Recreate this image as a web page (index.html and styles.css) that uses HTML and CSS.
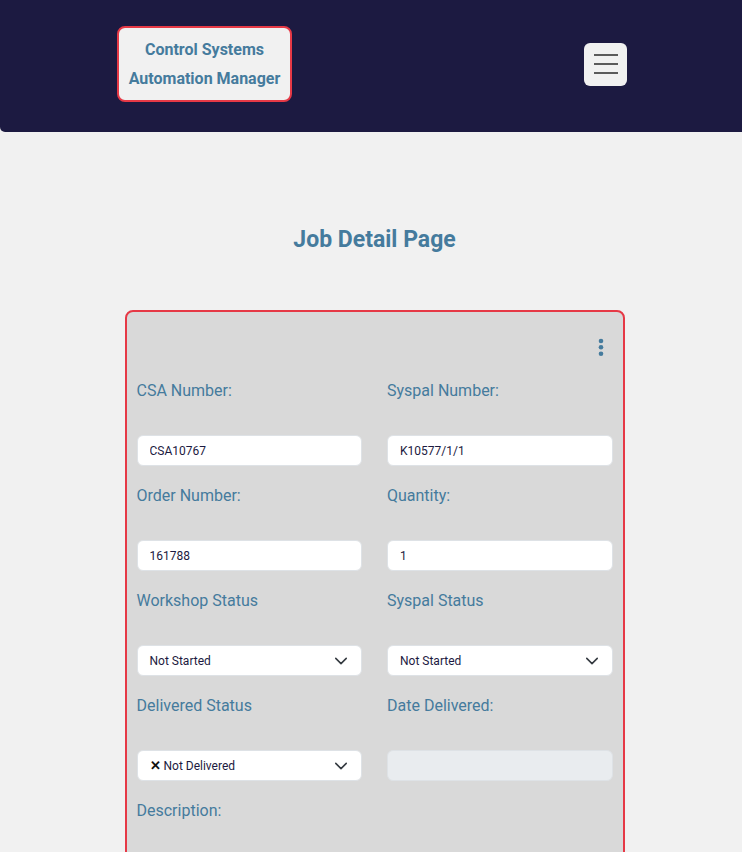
FILE: index.html
```html
<!DOCTYPE html>
<html lang="en">
<head>
<meta charset="utf-8">
<title>Job Detail Page</title>
<link rel="stylesheet" href="styles.css">
</head>
<body>
<header class="topbar">
  <div class="brand">Control Systems<br>Automation Manager</div>
  <button class="burger" aria-label="Menu">
    <span></span><span></span><span></span>
  </button>
</header>
<main class="page">
  <h1 class="title">Job Detail Page</h1>
  <section class="card">
    <div class="card-top">
      <button class="kebab" aria-label="More">
        <svg width="24" height="24" viewBox="0 0 24 24"><circle cx="12" cy="6" r="2.3" fill="#457b9d"/><circle cx="12" cy="12.3" r="2.3" fill="#457b9d"/><circle cx="12" cy="18.8" r="2.3" fill="#457b9d"/></svg>
      </button>
    </div>
    <div class="grid">
      <div class="field">
        <label class="label">CSA Number:</label>
        <input class="control" type="text" value="CSA10767">
      </div>
      <div class="field">
        <label class="label">Syspal Number:</label>
        <input class="control" type="text" value="K10577/1/1">
      </div>
      <div class="field">
        <label class="label">Order Number:</label>
        <input class="control" type="text" value="161788">
      </div>
      <div class="field">
        <label class="label">Quantity:</label>
        <input class="control" type="text" value="1">
      </div>
      <div class="field">
        <label class="label">Workshop Status</label>
        <div class="control select">Not Started<svg class="chev" width="14" height="14" viewBox="0 0 16 16"><path d="M2 5l6 6 6-6" fill="none" stroke="#343a40" stroke-width="1.8" stroke-linecap="round" stroke-linejoin="round"/></svg></div>
      </div>
      <div class="field">
        <label class="label">Syspal Status</label>
        <div class="control select">Not Started<svg class="chev" width="14" height="14" viewBox="0 0 16 16"><path d="M2 5l6 6 6-6" fill="none" stroke="#343a40" stroke-width="1.8" stroke-linecap="round" stroke-linejoin="round"/></svg></div>
      </div>
      <div class="field">
        <label class="label">Delivered Status</label>
        <div class="control select"><span class="x">✕</span>&nbsp;Not Delivered<svg class="chev" width="14" height="14" viewBox="0 0 16 16"><path d="M2 5l6 6 6-6" fill="none" stroke="#343a40" stroke-width="1.8" stroke-linecap="round" stroke-linejoin="round"/></svg></div>
      </div>
      <div class="field">
        <label class="label">Date Delivered:</label>
        <input class="control disabled" type="text" value="" disabled>
      </div>
      <div class="field wide">
        <label class="label">Description:</label>
        <textarea class="control area"></textarea>
      </div>
    </div>
  </section>
</main>
</body>
</html>
```
FILE: styles.css
```css
html { scrollbar-width: none; }
html::-webkit-scrollbar { display: none; }
* { box-sizing: border-box; }
body {
  margin: 0;
  background: #f1f1f1;
  font-family: Roboto, "Liberation Sans", sans-serif;
}
.topbar {
  height: 132px;
  background: #1c1a41;
  border-bottom-left-radius: 5px;
  display: flex;
  align-items: center;
  justify-content: space-between;
  padding: 0 115px 4px 117px;
}
.brand {
  width: 175px;
  height: 76px;
  padding: 7px 0;
  border: 2px solid #e63946;
  border-radius: 8px;
  background: #f1f1f1;
  color: #457b9d;
  font-weight: 700;
  font-size: 16px;
  line-height: 29px;
  text-align: center;
}
.burger {
  width: 43px;
  height: 43px;
  border: none;
  border-radius: 6px;
  background: #f1f1f1;
  display: flex;
  flex-direction: column;
  justify-content: center;
  align-items: center;
  gap: 7px;
  padding: 0;
}
.burger span {
  display: block;
  width: 24px;
  height: 2px;
  background: #5b5b5b;
}
.page {
  padding: 95px 0 0 7px;
  display: flex;
  flex-direction: column;
  align-items: center;
}
.title {
  margin: 0;
  height: 26px;
  line-height: 26px;
  font-size: 23px;
  font-weight: 700;
  color: #457b9d;
}
.card {
  margin-top: 57px;
  width: 500px;
  border: 2px solid #e63946;
  border-radius: 8px;
  background: #d9d9d9;
  padding: 10px;
}
.card-top {
  height: 50px;
  margin-bottom: 6px;
  display: flex;
  justify-content: flex-end;
  align-items: center;
}
.kebab {
  width: 24px;
  height: 24px;
  border: none;
  background: none;
  padding: 0;
  display: flex;
}
.grid {
  display: grid;
  grid-template-columns: 1fr 1fr;
  column-gap: 25px;
  row-gap: 17px;
}
.field {
  display: flex;
  flex-direction: column;
}
.wide { grid-column: 1 / -1; }
.label {
  height: 24px;
  padding-top: 1px;
  line-height: 24px;
  font-size: 16px;
  color: #457b9d;
  margin-bottom: 33px;
}
.control {
  height: 31px;
  width: 100%;
  border: 1px solid #dee2e6;
  border-radius: 6px;
  background: #fff;
  padding: 0 12px;
  font-family: Roboto, "Liberation Sans", sans-serif;
  font-size: 12px;
  color: #1c1a41;
  outline: none;
}
.select {
  display: flex;
  align-items: center;
  position: relative;
}
.chev {
  position: absolute;
  right: 13px;
  top: 8px;
}
.x { font-weight: 700; font-size: 13px; color: #111; }
.disabled { background: #e9ecef; }
.area { height: 80px; resize: none; }
```
